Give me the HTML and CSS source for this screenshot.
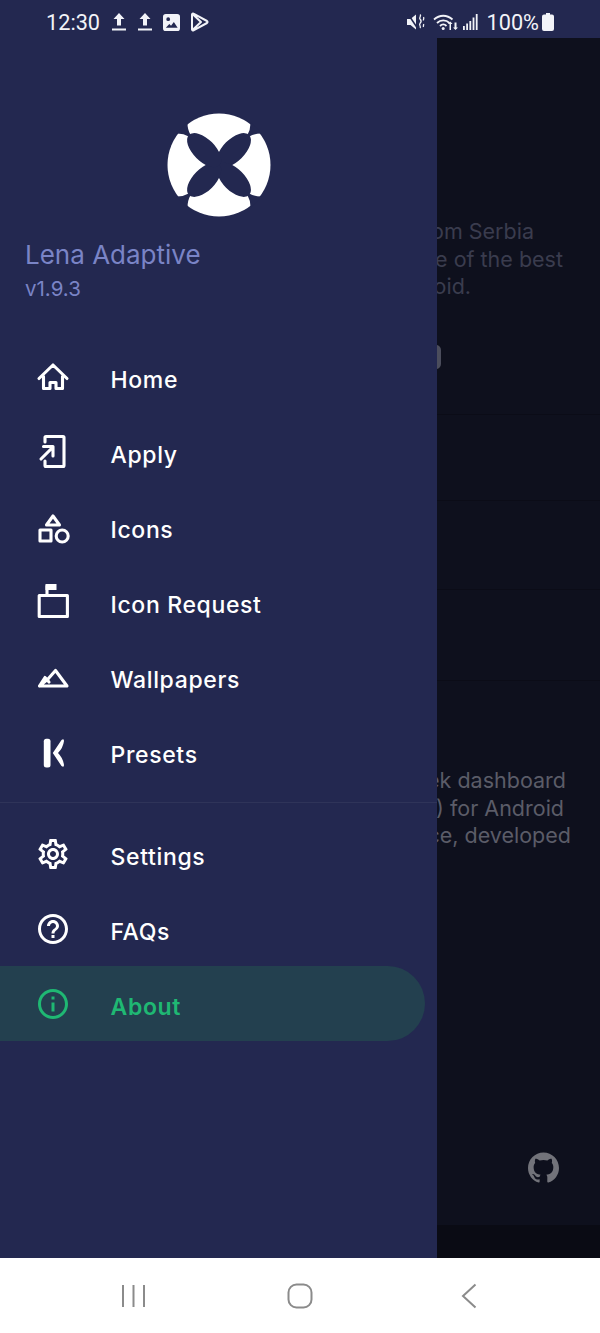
FILE: index.html
```html
<!DOCTYPE html>
<html lang="en">
<head>
<meta charset="utf-8">
<title>Lena Adaptive</title>
<link rel="stylesheet" href="styles.css">
</head>
<body>
<div class="screen">
  <header class="statusbar">
    <div class="status-group">
      <span class="clock">12:30</span>
      <svg class="si si-up" viewBox="0 0 16 18"><path d="M8 0 13.5 6H10v6.5H6V6H2.500z"/><rect x="1" y="15.500" width="14" height="2"/></svg>
      <svg class="si si-up" viewBox="0 0 16 18"><path d="M8 0 13.500 6H10v6.500H6V6H2.500z"/><rect x="1" y="15.500" width="14" height="2"/></svg>
      <svg class="si si-img" viewBox="0 0 18 18"><path fill-rule="evenodd" d="M3 0h12a3 3 0 0 1 3 3v12a3 3 0 0 1-3 3H3a3 3 0 0 1-3-3V3a3 3 0 0 1 3-3zm2.500 3.500a2 2 0 1 0 0 4 2 2 0 0 0 0-4zM3 14.500h12.500l-4-6-3 4-1.800-1.800z"/></svg>
      <svg class="si si-play" viewBox="0 0 19 20"><path class="play" d="M2 2.500v15a1 1 0 0 0 1.500.8L17 11a1.200 1.200 0 0 0 0-2L3.500 1.700A1 1 0 0 0 2 2.500zM2.500 2 11 10l-8.500 8"/></svg>
    </div>
    <div class="status-group status-right">
      <svg class="si si-mute" viewBox="0 0 18 18"><path d="M0 6h3.500L9 1.500v15L3.500 12H0z"/><path class="mute-x" d="M1 1l10 15"/><path class="mute-w" d="M13 1.500c2 1.500-1.500 3 0 4.500s1.500 3 0 4.500 1.500 3 0 4.500M16.500 4c1 1.500-.5 2 0 3.500M16.500 11c.5 1-.5 2 0 3"/></svg>
      <svg class="si si-wifi" viewBox="0 0 26 18"><path class="wifi" d="M1 6.500c5.500-5 13-5 18.500 0M4 10c3.500-3.500 9-3.500 12.500 0M7 13c2-2 4.500-2 6.500 0"/><circle cx="10.200" cy="15.500" r="1.500"/><path d="M16.500 12v6h1.500v-6h1.500l-2.200-2.500-2.300 2.500zM21.500 10.500v5H20l2.500 2.500 2.500-2.500h-1.500v-5z" transform="translate(0 -1)"/></svg>
      <svg class="si si-signal" viewBox="0 0 15 16"><rect x="0" y="12" width="1.800" height="4"/><rect x="3.200" y="9.500" width="1.800" height="6.500"/><rect x="6.400" y="7" width="1.800" height="9"/><rect x="9.600" y="3.500" width="1.800" height="12.500"/><rect x="12.800" y="0" width="1.800" height="16"/></svg>
      <span class="battery-text">100%</span>
      <svg class="si si-batt" viewBox="0 0 12 18"><path d="M4 0h4v1.500h2a2 2 0 0 1 2 2V16a2 2 0 0 1-2 2H2a2 2 0 0 1-2-2V3.500a2 2 0 0 1 2-2h2z"/></svg>
    </div>
  </header>

  <div class="content">
    <aside class="drawer">
      <div class="brand">
        <svg class="logo" viewBox="-52 -52 104 104">
          <circle class="logo-disc" r="51.500"/>
          <g class="logo-mark">
            <g transform="rotate(45)"><ellipse cy="-21" rx="11" ry="21.500"/><path d="M-1-41Q-3-48-8-52.500H8Q3-48 1-41z"/></g>
            <g transform="rotate(135)"><ellipse cy="-21" rx="11" ry="21.500"/><path d="M-1-41Q-3-48-8-52.500H8Q3-48 1-41z"/></g>
            <g transform="rotate(225)"><ellipse cy="-21" rx="11" ry="21.500"/><path d="M-1-41Q-3-48-8-52.500H8Q3-48 1-41z"/></g>
            <g transform="rotate(315)"><ellipse cy="-21" rx="11" ry="21.500"/><path d="M-1-41Q-3-48-8-52.500H8Q3-48 1-41z"/></g>
          </g>
        </svg>
        <div class="app-name">Lena Adaptive</div>
        <div class="app-version">v1.9.3</div>
      </div>

      <nav class="menu">
        <a class="item">
          <svg class="ic" viewBox="0 0 36 36"><path class="ln" d="M4 19.500 18 6l14 13.500M8.500 17.500v12h6.500v-6h6v6h6.500v-12"/></svg>
          <span class="label">Home</span>
        </a>
        <a class="item">
          <svg class="ic" viewBox="0 0 36 36"><path class="ln" d="M10 8V3.500q0-1 1-1h17q1 0 1 1v28q0 1-1 1H11q-1 0-1-1V27M6 25 17 14M8.500 12.500H18V22"/></svg>
          <span class="label">Apply</span>
        </a>
        <a class="item">
          <svg class="ic" viewBox="0 0 36 36"><path class="ln" d="M18 7l6.500 9h-13zM5 21h11v11H5z"/><circle class="ln" cx="27.200" cy="27" r="6"/></svg>
          <span class="label">Icons</span>
        </a>
        <a class="item">
          <svg class="ic" viewBox="0 0 36 36"><rect class="fl" x="10.500" y="0" width="11" height="6"/><path class="ln" d="M12 11.500H4.200v21h28.200v-21H12V2"/></svg>
          <span class="label">Icon Request</span>
        </a>
        <a class="item">
          <svg class="ic" viewBox="0 0 36 36"><path class="ln" d="M4.500 27 10 18.500l4 4.500M13 20l7.500-8.500L32 27H4.500z"/></svg>
          <span class="label">Wallpapers</span>
        </a>
        <a class="item">
          <svg class="ic" viewBox="0 0 36 36"><rect class="fl" x="8.800" y="4.800" width="6.700" height="28.700" rx="2.500"/><path class="fl" d="M17.800 19 26.500 6Q29 4 29 7 28 14 23 19 28 24 29 31 29 34 26.500 32Z"/></svg>
          <span class="label">Presets</span>
        </a>
      </nav>

      <div class="divider"></div>

      <nav class="menu">
        <a class="item">
          <svg class="ic" viewBox="0 0 24 24"><path class="fl" d="M19.430 12.980c.04-.32.07-.64.07-.98 0-.34-.03-.66-.07-.98l2.110-1.650c.19-.15.24-.42.12-.64l-2-3.460c-.09-.16-.26-.25-.44-.25-.06 0-.12.01-.17.03l-2.490 1c-.52-.4-1.080-.73-1.690-.98l-.38-2.650C14.460 2.180 14.250 2 14 2h-4c-.25 0-.46.18-.49.42l-.38 2.650c-.61.25-1.170.59-1.690.98l-2.490-1c-.06-.02-.12-.03-.18-.03-.17 0-.34.09-.43.25l-2 3.460c-.13.22-.07.49.12.64l2.110 1.650c-.04.32-.07.65-.07.98 0 .33.03.66.07.98l-2.110 1.650c-.19.15-.24.42-.12.64l2 3.460c.09.16.26.25.44.25.06 0 .12-.01.17-.03l2.490-1c.52.4 1.080.73 1.690.98l.38 2.650c.03.24.24.42.49.42h4c.25 0 .46-.18.49-.42l.38-2.650c.61-.25 1.170-.59 1.690-.98l2.490 1c.06.02.12.03.18.03.17 0 .34-.09.43-.25l2-3.460c.12-.22.07-.49-.12-.64l-2.110-1.650zm-1.980-1.710c.04.31.05.52.05.73 0 .21-.02.43-.05.73l-.14 1.130.89.7 1.080.84-.7 1.210-1.270-.51-1.040-.42-.9.68c-.43.32-.84.56-1.250.73l-1.060.43-.16 1.130-.2 1.350h-1.400l-.19-1.350-.16-1.130-1.060-.43c-.43-.18-.83-.41-1.230-.71l-.91-.7-1.060.43-1.270.51-.7-1.210 1.080-.84.89-.7-.14-1.130c-.03-.31-.05-.54-.05-.74s.02-.43.05-.73l.14-1.130-.89-.7-1.080-.84.7-1.210 1.270.51 1.040.42.9-.68c.43-.32.84-.56 1.250-.73l1.060-.43.16-1.130.2-1.350h1.390l.19 1.350.16 1.130 1.060.43c.43.18.83.41 1.230.71l.91.7 1.060-.43 1.270-.51.7 1.210-1.070.85-.89.7.14 1.130zM12 8c-2.210 0-4 1.790-4 4s1.790 4 4 4 4-1.790 4-4-1.790-4-4-4zm0 6c-1.100 0-2-.9-2-2s.9-2 2-2 2 .9 2 2-.9 2-2 2z"/></svg>
          <span class="label">Settings</span>
        </a>
        <a class="item">
          <svg class="ic" viewBox="0 0 24 24"><path class="fl" d="M11 18h2v-2h-2v2zm1-16C6.480 2 2 6.480 2 12s4.480 10 10 10 10-4.480 10-10S17.520 2 12 2zm0 18c-4.410 0-8-3.590-8-8s3.590-8 8-8 8 3.590 8 8-3.590 8-8 8zm0-14c-2.210 0-4 1.790-4 4h2c0-1.100.9-2 2-2s2 .9 2 2c0 2-3 1.750-3 5h2c0-2.250 3-2.500 3-5 0-2.210-1.790-4-4-4z"/></svg>
          <span class="label">FAQs</span>
        </a>
        <a class="item item-active">
          <svg class="ic" viewBox="0 0 24 24"><path class="fl" d="M11 7h2v2h-2zm0 4h2v6h-2zm1-9C6.480 2 2 6.480 2 12s4.480 10 10 10 10-4.480 10-10S17.520 2 12 2zm0 18c-4.410 0-8-3.590-8-8s3.590-8 8-8 8 3.590 8 8-3.590 8-8 8z"/></svg>
          <span class="label">About</span>
        </a>
      </nav>
    </aside>

    <main class="behind">
      <section class="sec sec-hero">
        <div class="lines">
          <span class="line l-a">from Serbia</span>
          <span class="line l-b">one of the best</span>
          <span class="line l-c">Android.</span>
        </div>
        <div class="peek-btn"></div>
      </section>
      <section class="sec sec-2"></section>
      <section class="sec sec-3"></section>
      <section class="sec sec-4"></section>
      <section class="sec sec-about">
        <div class="lines lines-dim">
          <span class="line l-d">a sleek dashboard</span>
          <span class="line l-e">(KWGT) for Android</span>
          <span class="line l-f">source, developed</span>
        </div>
        <svg class="github" viewBox="0 0 24 24"><path d="M12 .297c-6.630 0-12 5.373-12 12 0 5.303 3.438 9.800 8.205 11.385.6.113.82-.258.82-.577 0-.285-.01-1.040-.015-2.040-3.338.724-4.042-1.610-4.042-1.610C4.422 18.070 3.633 17.700 3.633 17.700c-1.087-.744.084-.729.084-.729 1.205.084 1.838 1.236 1.838 1.236 1.070 1.835 2.809 1.305 3.495.998.108-.776.417-1.305.76-1.605-2.665-.3-5.466-1.332-5.466-5.930 0-1.310.465-2.380 1.235-3.220-.135-.303-.54-1.523.105-3.176 0 0 1.005-.322 3.300 1.230.96-.267 1.980-.399 3-.405 1.020.006 2.040.138 3 .405 2.280-1.552 3.285-1.230 3.285-1.230.645 1.653.24 2.873.12 3.176.765.84 1.230 1.910 1.230 3.220 0 4.610-2.805 5.625-5.475 5.920.42.36.81 1.096.81 2.220 0 1.606-.015 2.896-.015 3.286 0 .315.21.69.825.57C20.565 22.092 24 17.592 24 12.297c0-6.627-5.373-12-12-12"/></svg>
      </section>
      <div class="strip"></div>
    </main>
  </div>

  <footer class="navbar">
    <svg class="nav-ic nav-recents" viewBox="0 0 24 24"><path d="M2 1v22M12.500 1v22M23 1v22"/></svg>
    <svg class="nav-ic nav-home" viewBox="0 0 26 26"><rect x="1.500" y="1.500" width="23" height="23" rx="8"/></svg>
    <svg class="nav-ic nav-back" viewBox="0 0 16 26"><path d="M14.500 1.500 2 13l12.500 11.500"/></svg>
  </footer>
</div>
</body>
</html>
```
FILE: styles.css
```css
* { box-sizing: border-box; }
html, body { margin: 0; padding: 0; }
body { background: #fff; font-family: "Inter", "Liberation Sans", sans-serif; }

.screen { width: 600px; height: 1333px; display: flex; flex-direction: column; overflow: hidden; }

/* status bar */
.statusbar {
  height: 38px; flex: none; background: #232850; color: #f2f3f8;
  display: flex; justify-content: space-between; align-items: center;
  padding: 6px 46px 0 46px;
  font-family: "Roboto", sans-serif; font-size: 21.700px;
}
.status-group { display: flex; align-items: center; }
.si { display: block; fill: #f2f3f8; }
.clock { margin-right: 11px; }
.si-up { width: 16px; height: 18px; margin-right: 10px; }
.si-img { width: 17px; height: 17px; margin-right: 10px; }
.si-play { width: 19px; height: 20px; }
.play { fill: none; stroke: #f2f3f8; stroke-width: 2; stroke-linejoin: round; }
.si-mute { width: 18px; height: 18px; margin-right: 8px; }
.mute-x { stroke: #232850; stroke-width: 1.500; }
.mute-w { fill: none; stroke: #f2f3f8; stroke-width: 1.300; }
.si-wifi { width: 26px; height: 18px; margin-right: 4px; }
.wifi { fill: none; stroke: #f2f3f8; stroke-width: 1.800; }
.si-signal { width: 15px; height: 16px; margin-right: 9px; }
.battery-text { margin-right: 3px; }
.si-batt { width: 12px; height: 18px; }

/* body */
.content { flex: 1; display: flex; min-height: 0; }

.drawer { width: 437px; flex: none; background: #232850; display: flex; flex-direction: column; }
.brand { height: 301px; padding: 75px 0 0 25px; display: flex; flex-direction: column; }
.logo { width: 104px; height: 104px; margin: 0 0 0 142px; display: block; flex: none; }
.logo-disc { fill: #fff; }
.logo-mark { fill: #232850; }
.app-name { margin-top: 22px; font-size: 26px; line-height: 32px; color: #7a84c6; }
.app-version { margin-top: 5px; font-size: 20.500px; line-height: 26px; color: #7a84c6; }

.menu { display: flex; flex-direction: column; }
.item {
  height: 75px; display: flex; align-items: center; gap: 40px;
  padding-left: 34.500px; color: #fff;
  margin-right: 12px; border-radius: 0 37.500px 37.500px 0;
}
.ic { width: 36px; height: 36px; flex: none; display: block; }
.ln { fill: none; stroke: currentColor; stroke-width: 3.100; stroke-linejoin: round; stroke-linecap: round; }
.fl { fill: currentColor; }
.label { font-size: 23px; font-weight: 450; line-height: 30px; padding-top: 6px; letter-spacing: .65px; }
.divider { height: 1px; background: #2f3459; margin: 13px 0 13px; flex: none; }
.item-active { background: #23404f; color: #1fb873; }
.item-active .label { font-weight: 600; }

/* dimmed page behind the drawer */
.behind { flex: 1; min-width: 0; display: flex; flex-direction: column; background: #0e101d; overflow: hidden; }
.sec { border-bottom: 1px solid #0b0c17; flex: none; position: relative; }
.sec-hero { height: 377px; padding-top: 180px; }
.sec-2 { height: 86px; }
.sec-3 { height: 89px; }
.sec-4 { height: 91px; }
.sec-about { height: 544px; padding-top: 86px; border-bottom: 0; }
.strip { flex: 1; background: #0a0b14; }
.lines { display: flex; flex-direction: column; align-items: flex-end; color: #3a3c4e; font-size: 21.500px; line-height: 27.500px; }
.lines-dim { color: #5b5c68; }
.line { white-space: nowrap; }
.l-a { margin-right: 66px; }
.l-b { margin-right: 37px; }
.l-c { margin-right: 129px; }
.l-d { margin-right: 34px; }
.l-e { margin-right: 36px; }
.l-f { margin-right: 29px; }
.peek-btn { position: absolute; left: -20px; top: 307px; width: 24px; height: 24px; background: #4b4d5c; border-radius: 5px; }
.github { position: absolute; left: 91px; top: 471px; width: 31px; height: 31px; fill: #72737a; }

/* navigation bar */
.navbar { height: 75px; flex: none; background: #fff; display: flex; align-items: center; position: relative; }
.nav-ic { fill: none; stroke: #8b8b8b; stroke-width: 2; display: block; flex: none; }
.nav-recents { width: 24px; height: 24px; margin-left: 121px; }
.nav-home { width: 26px; height: 26px; margin-left: 142px; }
.nav-back { width: 16px; height: 26px; margin-left: 148px; }
```
